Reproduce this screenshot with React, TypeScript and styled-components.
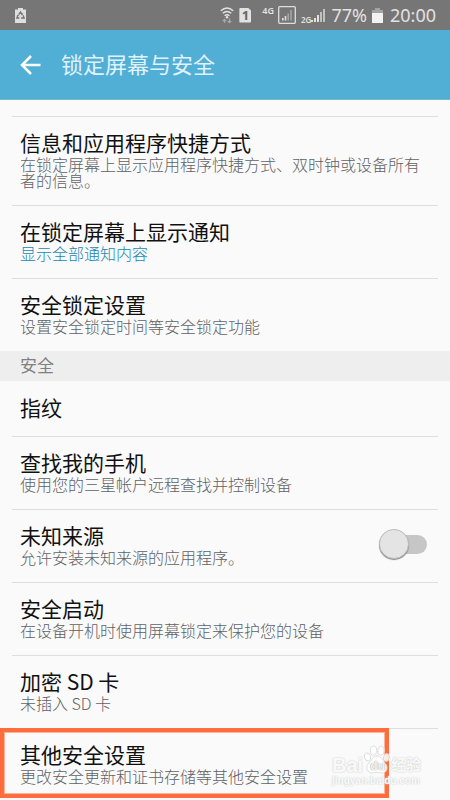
import React from "react";
import styled, { createGlobalStyle } from "styled-components";

const GlobalStyle = createGlobalStyle`
  * { box-sizing: border-box; }
  body {
    margin: 0;
    background: #fafafa;
    font-family: "Noto Sans CJK SC", "Noto Sans", sans-serif;
    color: #111;
  }
  button { font: inherit; color: inherit; border: 0; background: none; padding: 0; }
  h1, h2, p { margin: 0; font-weight: 400; }
`;

const Screen = styled.div`
  display: flex;
  flex-direction: column;
`;

const StatusBar = styled.div`
  display: flex;
  align-items: center;
  justify-content: space-between;
  height: 30px;
  padding: 0 14px;
  background: #767676;
  color: #e2e2e2;
  font-family: "Noto Sans", sans-serif;
`;

const StatusGroup = styled.div`
  display: flex;
  align-items: center;
  svg { display: block; }
`;

const StatusText = styled.span<{ $gap?: number }>`
  font-size: 18px;
  line-height: 30px;
  margin-left: ${(p) => p.$gap ?? 0}px;
`;

const SmallLabel = styled.span<{ $low?: boolean }>`
  align-self: ${(p) => (p.$low ? "flex-end" : "flex-start")};
  font-size: ${(p) => (p.$low ? 8 : 9)}px;
  line-height: 10px;
  font-weight: 600;
  margin-left: ${(p) => (p.$low ? 5 : 11)}px;
`;

const SignalGroup = styled.div<{ $low?: boolean }>`
  display: flex;
  align-items: center;
  height: ${(p) => (p.$low ? 20 : 18)}px;
`;

const Header = styled.header`
  display: flex;
  align-items: center;
  height: 70px;
  padding: 0 20px;
  gap: 20px;
  background: #51aed5;
  border-bottom: 1px solid #79b7cf;
`;

const BackButton = styled.button`
  display: flex;
  width: 21px;
  height: 30px;
  align-items: center;
`;

const Title = styled.h1`
  color: #e0f2fa;
  font-size: 22px;
  line-height: 28px;
  padding-bottom: 4px;
`;

const List = styled.main`
  padding-top: 16px;
`;

const Entry = styled.div<{ $plain?: boolean }>`
  position: relative;
  padding: 0 12px;
  &::before {
    content: "";
    display: block;
    height: 1px;
    background: ${(p) => (p.$plain ? "transparent" : "#dedede")};
  }
`;

const RowButton = styled.button`
  display: block;
  width: 100%;
  padding: 13px 8px 17px;
  text-align: left;
`;

const RowLabel = styled.label`
  display: flex;
  align-items: center;
  justify-content: space-between;
  padding: 13px 11px 17px 8px;
`;

const RowTitle = styled.span`
  display: block;
  font-size: 21px;
  line-height: 24px;
`;

const RowNote = styled.span<{ $accent?: boolean }>`
  display: block;
  margin-top: 2px;
  font-size: 16px;
  line-height: 16px;
  font-weight: 300;
  color: ${(p) => (p.$accent ? "#1f86b0" : "#5f6265")};
`;

const SectionTitle = styled.h2`
  padding: 0 20px 2px;
  background: #eee;
  color: #808080;
  font-size: 17px;
  line-height: 28px;
`;

const Switch = styled.input`
  appearance: none;
  flex: none;
  display: flex;
  align-items: center;
  width: 48px;
  height: 19px;
  margin: 0;
  border-radius: 10px;
  background: linear-gradient(90deg, transparent 12px, #c6c6c6 12px);
  &::before {
    content: "";
    width: 28px;
    height: 28px;
    flex: none;
    border-radius: 50%;
    background: #e4e4e4;
    border: 1px solid #bdbdbd;
    box-shadow: 0 1px 1px #858585;
  }
  &:checked { background: #8fcbe4; }
  &:checked::before { margin-left: 20px; }
`;

const Highlight = styled.div`
  position: absolute;
  inset: 0 61px 3px 0;
  border: 4px solid #ff6d3c;
  outline: 1px solid #ffb499;
  outline-offset: -5px;
  pointer-events: none;
`;

const Watermark = styled.div`
  position: absolute;
  right: 28px;
  top: 17px;
  width: 90px;
  color: rgba(255, 255, 255, 0.9);
  font-family: "Liberation Sans", "Noto Sans CJK SC", sans-serif;
  font-weight: 700;
  text-shadow: 0 0 2px #ccc, 0 0 1px #ddd;
  pointer-events: none;
`;

const MarkLine = styled.div`
  display: flex;
  align-items: flex-end;
  height: 30px;
`;

const MarkWord = styled.span<{ $cjk?: boolean }>`
  font-size: ${(p) => (p.$cjk ? 15 : 20)}px;
  line-height: 20px;
`;

const MarkAddress = styled.div`
  font-size: 10px;
  line-height: 12px;
`;

const Paw = styled.span`
  position: relative;
  width: 28px;
  height: 30px;
  svg { display: block; }
`;

const PawText = styled.span`
  position: absolute;
  left: 7px;
  top: 14px;
  font-size: 12px;
  line-height: 14px;
  text-shadow: 0 0 1px #999, 0 0 1px #bbb;
`;

function BatteryRecycleIcon() {
  return (
    <svg width="13" height="17" viewBox="0 0 13 17" aria-hidden="true">
      <path d="M1 2.500h3V1h5v1.500h3V16H1z" fill="#dedede" />
      <g fill="none" stroke="#767676" strokeWidth="1.300">
        <path d="M4.700 7.700 6.500 5l1.700 2.500M9 8.300l1.200 2.700H7.600M5.400 11H2.800L4 8.300" />
        <path d="M7 7.700h1.600V6.200M8.300 10l-1 1 1 1M2.900 8.800l1.200-.8.900 1.100" strokeWidth=".8" />
      </g>
    </svg>
  );
}

function WifiIcon() {
  return (
    <svg width="14" height="18" viewBox="0 0 14 18" aria-hidden="true">
      <g fill="none" stroke="#e2e2e2" strokeWidth="1.400">
        <path d="M.8 4.800q6.200-5.600 12.400 0M2.700 7.300q4.300-3.800 8.600 0M4.600 9.700q2.400-2 4.800 0" />
      </g>
      <circle cx="7" cy="11.300" r="1.200" fill="#e2e2e2" />
      <path d="M4.500 12.500 7 15H5.200v2H3.800v-2H2zM9.500 17.500 12 15h-1.800v-2.500H8.800V15H7z" fill="#a8a8a8" />
    </svg>
  );
}

const SimCard = styled.span`
  width: 12px;
  height: 15px;
  margin-left: 5px;
  background: #e2e2e2;
  color: #686868;
  clip-path: polygon(0 0, 70% 0, 100% 22%, 100% 100%, 0 100%);
  border-radius: 1px;
  font-size: 13px;
  line-height: 15px;
  font-weight: 700;
  text-align: center;
`;

function BoxedSignalIcon() {
  return (
    <svg width="18" height="18" viewBox="0 0 18 18" aria-hidden="true">
      <rect x=".7" y=".7" width="16.600" height="16.600" rx="1" fill="none" stroke="#dedede" strokeWidth="1.300" />
      <path d="M4 14.500v-2.500h1.600v2.500zM6.700 14.500v-4.500h1.600v4.500z" fill="#e2e2e2" />
      <path d="M9.400 14.500v-7H11v7zM12.200 14.500v-10.500h1.600v10.500z" fill="#a5a5a5" />
    </svg>
  );
}

function SignalIcon() {
  return (
    <svg width="15" height="14" viewBox="0 0 15 14" aria-hidden="true">
      <path d="M0 14v-2h2v2zM3 14v-4h2v4zM6 14V7h2v7z" fill="#e2e2e2" />
      <path d="M9 14V4h2v10zM12 14V1h2v13z" fill="#c0c0c0" />
    </svg>
  );
}

const BatteryWrap = styled.span`
  margin-left: 5px;
`;

function BatteryIcon() {
  return (
    <svg width="11" height="15" viewBox="0 0 11 15" aria-hidden="true">
      <path d="M0 2h3V0h5v2h3v3H0z" fill="#a4a4a4" />
      <path d="M0 5h11v10H0z" fill="#f2f2f2" />
    </svg>
  );
}

function PawIcon() {
  return (
    <svg width="28" height="30" viewBox="0 0 28 30" aria-hidden="true">
      <g fill="#fff" fillOpacity=".85" stroke="#d6d6d6" strokeWidth=".8">
        <ellipse cx="4.500" cy="12" rx="3" ry="4" transform="rotate(-15 4.500 12)" />
        <ellipse cx="10.500" cy="5.500" rx="3.200" ry="4.500" />
        <ellipse cx="18" cy="5.700" rx="3.200" ry="4.500" transform="rotate(10 18 5.700)" />
        <ellipse cx="23.500" cy="12.500" rx="3" ry="4" transform="rotate(15 23.500 12.500)" />
        <path d="M14 11c4 0 5 4 8 7 4 4 2 10-3 10-2 0-3-.6-5-.6s-3 .6-5 .6c-5 0-7-6-3-10 3-3 4-7 8-7z" />
      </g>
    </svg>
  );
}

type Setting = { title: string; note?: string; accent?: boolean };

const lockSettings: Setting[] = [
  {
    title: "信息和应用程序快捷方式",
    note: "在锁定屏幕上显示应用程序快捷方式、双时钟或设备所有者的信息。",
  },
  { title: "在锁定屏幕上显示通知", note: "显示全部通知内容", accent: true },
  { title: "安全锁定设置", note: "设置安全锁定时间等安全锁定功能" },
];

function SettingText({ title, note, accent }: Setting) {
  return (
    <span>
      <RowTitle>{title}</RowTitle>
      {note && <RowNote $accent={accent}>{note}</RowNote>}
    </span>
  );
}

function SettingRow({
  plain,
  children,
  ...setting
}: Setting & { plain?: boolean; children?: React.ReactNode }) {
  return (
    <Entry $plain={plain}>
      <RowButton type="button">
        <SettingText {...setting} />
      </RowButton>
      {children}
    </Entry>
  );
}

export default function App() {
  return (
    <Screen>
      <GlobalStyle />
      <StatusBar>
        <StatusGroup>
          <BatteryRecycleIcon />
        </StatusGroup>
        <StatusGroup>
          <WifiIcon />
          <SimCard>1</SimCard>
          <SignalGroup>
            <SmallLabel>4G</SmallLabel>
          </SignalGroup>
          <StatusText $gap={4}>
            <BoxedSignalIcon />
          </StatusText>
          <SignalGroup $low>
            <SmallLabel $low>2G</SmallLabel>
          </SignalGroup>
          <SignalIcon />
          <StatusText $gap={5}>77%</StatusText>
          <BatteryWrap>
            <BatteryIcon />
          </BatteryWrap>
          <StatusText $gap={7}>20:00</StatusText>
        </StatusGroup>
      </StatusBar>
      <Header>
        <BackButton type="button" aria-label="返回">
          <svg width="21" height="20" viewBox="0 0 21 20" aria-hidden="true">
            <path d="M11 1 2 10l9 9M2 10h18.500" fill="none" stroke="#fff" strokeWidth="2.500" />
          </svg>
        </BackButton>
        <Title>锁定屏幕与安全</Title>
      </Header>
      <List>
        {lockSettings.map((s) => (
          <SettingRow key={s.title} {...s} />
        ))}
        <SectionTitle>安全</SectionTitle>
        <SettingRow plain title="指纹" />
        <SettingRow title="查找我的手机" note="使用您的三星帐户远程查找并控制设备" />
        <Entry>
          <RowLabel>
            <SettingText title="未知来源" note="允许安装未知来源的应用程序。" />
            <Switch type="checkbox" role="switch" />
          </RowLabel>
        </Entry>
        <SettingRow title="安全启动" note="在设备开机时使用屏幕锁定来保护您的设备" />
        <SettingRow title="加密 SD 卡" note="未插入 SD 卡" />
        <SettingRow title="其他安全设置" note="更改安全更新和证书存储等其他安全设置">
          <Highlight />
          <Watermark>
            <MarkLine>
              <MarkWord>Bai</MarkWord>
              <Paw>
                <PawIcon />
                <PawText>du</PawText>
              </Paw>
              <MarkWord $cjk>经验</MarkWord>
            </MarkLine>
            <MarkAddress>jingyan.baidu.com</MarkAddress>
          </Watermark>
        </SettingRow>
      </List>
    </Screen>
  );
}
